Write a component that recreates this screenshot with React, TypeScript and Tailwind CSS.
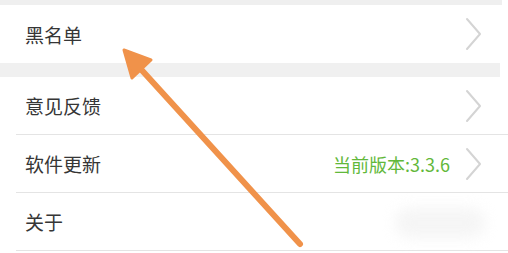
import React from 'react';

const font = { fontFamily: '"Noto Sans CJK SC", "Noto Sans", sans-serif' };

function Chevron() {
  return (
    <svg width="18" height="34" viewBox="0 0 18 34" className="shrink-0">
      <path d="M2 2 L15 17 L2 32" fill="none" stroke="#d4d4d4" strokeWidth="2" strokeLinecap="round" strokeLinejoin="round" />
    </svg>
  );
}

function Row({ label, extra, chevron = true, border = true }: { label: string; extra?: string; chevron?: boolean; border?: boolean }) {
  return (
    <div className="bg-white pl-4">
      <div className={`h-[58px] flex items-center pl-[9px] pr-[25px] ${border ? 'border-b border-[#e4e4e4]' : ''}`}>
        <span className="text-[19px] text-[#363636] flex-1 leading-none">{label}</span>
        {extra && <span className="text-[18px] text-[#62b83a] mr-[15px] leading-none">{extra}</span>}
        {chevron ? <Chevron /> : <div className="w-[18px]" />}
      </div>
    </div>
  );
}

export default function App() {
  return (
    <div className="relative w-[508px] h-[253px] overflow-hidden bg-white" style={font}>
      <div className="h-[5px] bg-[#efefef] mr-[6px]" />
      <div className="bg-white pl-4">
        <div className="h-[58px] flex items-center pl-[9px] pr-[25px]">
          <span className="text-[19px] text-[#363636] flex-1 leading-none">黑名单</span>
          <Chevron />
        </div>
      </div>
      <div className="h-[14px] bg-[#f0f0f0] mr-[8px]" />
      <Row label="意见反馈" />
      <Row label="软件更新" extra="当前版本:3.3.6" />
      <Row label="关于" chevron={false} />

      {/* watermark blur */}
      <div className="absolute left-[395px] top-[208px] w-[90px] h-[30px] rounded-full bg-[#f1f1f1] blur-[7px] opacity-70" />

      {/* annotation arrow */}
      <svg className="absolute inset-0 pointer-events-none" width="508" height="253" viewBox="0 0 508 253">
        <line x1="300" y1="244" x2="138" y2="66" stroke="#f0924a" strokeWidth="6" strokeLinecap="round" />
        <polygon points="124,50 151,60 132,78" fill="#f0924a" stroke="#f0924a" strokeWidth="3" strokeLinejoin="round" />
      </svg>
    </div>
  );
}
